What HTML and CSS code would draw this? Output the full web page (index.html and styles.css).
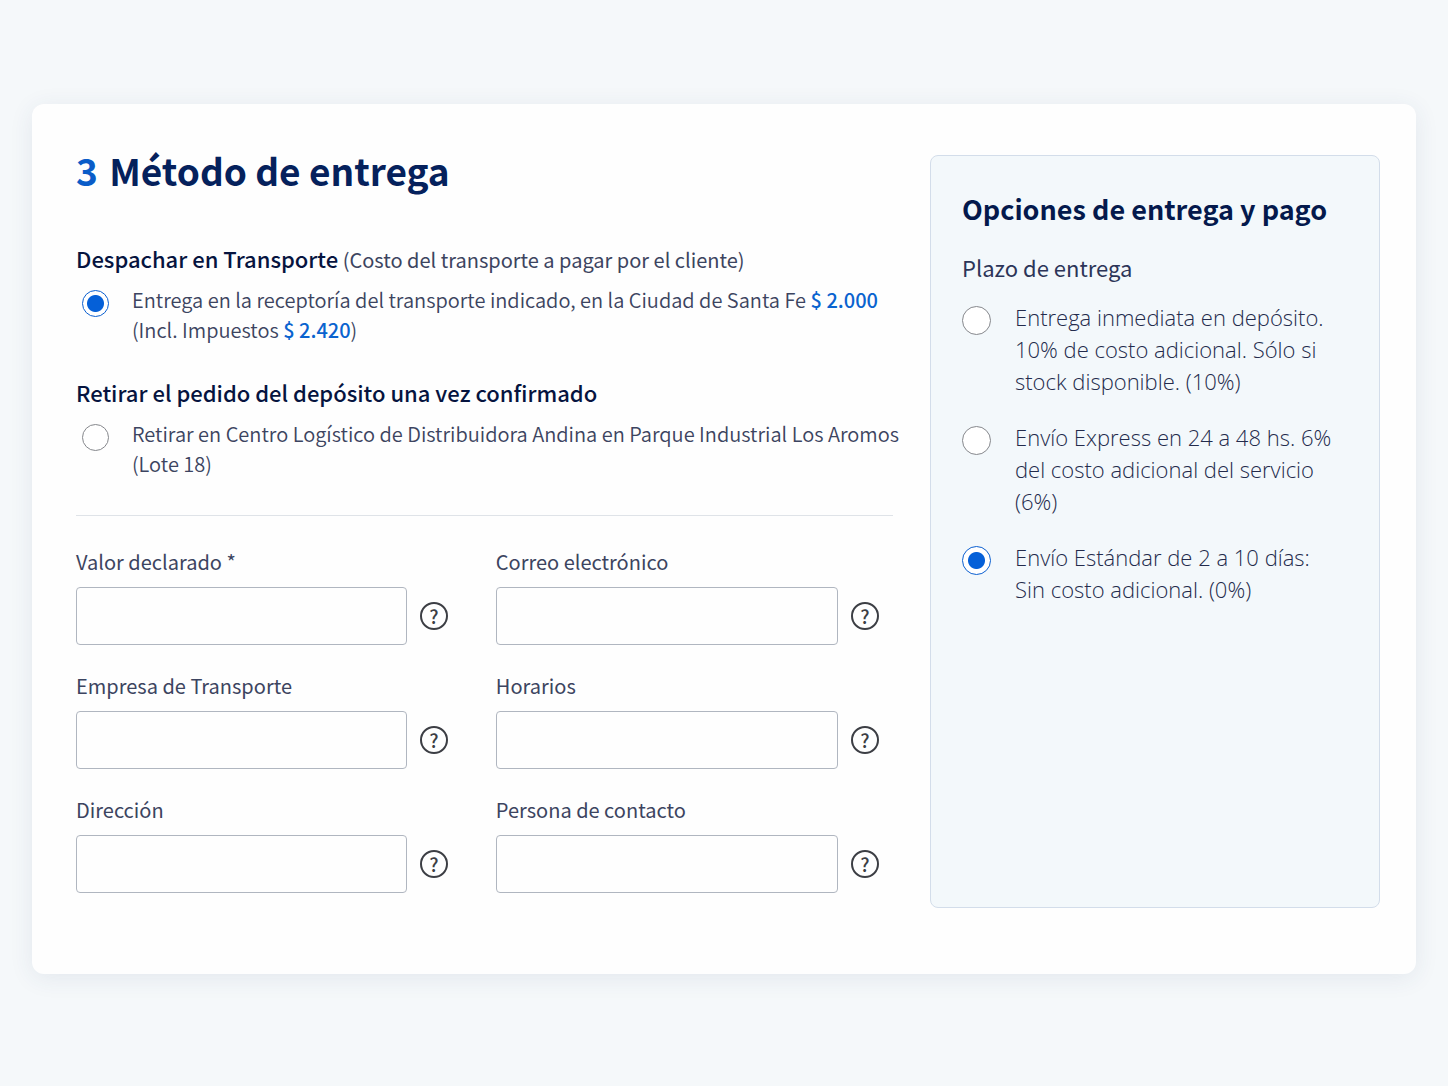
FILE: index.html
```html
<!DOCTYPE html>
<html lang="es">
<head>
	<meta charset="utf-8">
	<meta name="viewport" content="width=device-width, initial-scale=1">
	<title>Método de entrega</title>
	<link rel="stylesheet" href="styles.css">
</head>
<body>
<form class="card">
	<div class="main">
		<h1 class="title"><span class="step">3</span> Método de entrega</h1>
		<fieldset class="group">
			<legend><b>Despachar en Transporte</b> (Costo del transporte a pagar por el cliente)</legend>
			<div class="option">
				<input type="radio" name="metodo" id="despachar" checked>
				<label for="despachar">Entrega en la receptoría del transporte indicado, en la Ciudad de Santa Fe <span class="price">$ 2.000</span><br>(Incl. Impuestos <span class="price">$ 2.420</span>)</label>
			</div>
		</fieldset>
		<fieldset class="group">
			<legend><b>Retirar el pedido del depósito una vez confirmado</b></legend>
			<div class="option">
				<input type="radio" name="metodo" id="retirar">
				<label for="retirar">Retirar en Centro Logístico de Distribuidora Andina en Parque Industrial Los Aromos (Lote 18)</label>
			</div>
		</fieldset>
		<hr class="line">
		<div class="fields">
			<div class="field">
				<label for="valor">Valor declarado *</label>
				<div class="control">
					<input type="text" id="valor" required>
					<button type="button" class="help">?</button>
				</div>
			</div>
			<div class="field">
				<label for="correo">Correo electrónico</label>
				<div class="control">
					<input type="email" id="correo">
					<button type="button" class="help">?</button>
				</div>
			</div>
			<div class="field">
				<label for="empresa">Empresa de Transporte</label>
				<div class="control">
					<input type="text" id="empresa">
					<button type="button" class="help">?</button>
				</div>
			</div>
			<div class="field">
				<label for="horarios">Horarios</label>
				<div class="control">
					<input type="text" id="horarios">
					<button type="button" class="help">?</button>
				</div>
			</div>
			<div class="field">
				<label for="direccion">Dirección</label>
				<div class="control">
					<input type="text" id="direccion">
					<button type="button" class="help">?</button>
				</div>
			</div>
			<div class="field">
				<label for="contacto">Persona de contacto</label>
				<div class="control">
					<input type="text" id="contacto">
					<button type="button" class="help">?</button>
				</div>
			</div>
		</div>
	</div>
	<aside class="side">
		<h2>Opciones de entrega y pago</h2>
		<fieldset class="terms">
			<legend>Plazo de entrega</legend>
			<div class="option">
				<input type="radio" name="plazo" id="inmediata">
				<label for="inmediata">Entrega inmediata en depósito. 10% de costo adicional. Sólo si stock disponible. (10%)</label>
			</div>
			<div class="option">
				<input type="radio" name="plazo" id="express">
				<label for="express">Envío Express en 24 a 48 hs. 6% del costo adicional del servicio (6%)</label>
			</div>
			<div class="option">
				<input type="radio" name="plazo" id="estandar" checked>
				<label for="estandar">Envío Estándar de 2 a 10 días:<br>Sin costo adicional. (0%)</label>
			</div>
		</fieldset>
	</aside>
</form>
</body>
</html>
```
FILE: styles.css
```css
*{
	margin:0;
	padding:0;
	box-sizing:border-box;
}
body{
	min-height:100vh;
	padding:104px 32px;
	background:#f5f8fa;
	font-family:"Noto Sans CJK SC","Noto Sans",sans-serif;
	font-size:20px;
	line-height:30px;
	color:#3c4460;
}
fieldset{
	border:0;
	min-width:0;
}
.card{
	display:grid;
	grid-template-columns:minmax(0,1fr) 450px;
	gap:25px;
	padding:51px 36px 66px 44px;
	background:#fefefe;
	border-radius:12px;
	box-shadow:0 4px 24px rgba(40,70,110,.09);
}
.main{
	padding-bottom:15px;
}
.title{
	margin-bottom:60px;
	font-size:37px;
	line-height:30px;
	font-weight:700;
	color:#05215c;
}
.step{
	margin-right:3px;
	color:#0a5cc8;
}
.group{
	margin-bottom:34px;
}
.group legend{
	margin-bottom:10px;
}
.group b{
	font-size:22px;
	line-height:1;
	font-weight:500;
	color:#06143f;
}
.option{
	display:flex;
	align-items:flex-start;
	gap:23px;
}
.group .option{
	padding-left:6px;
	font-weight:350;
}
.option input{
	appearance:none;
	flex:none;
	width:27px;
	height:27px;
	margin-top:5px;
	border:1px solid #85878c;
	border-radius:50%;
	background:#fff;
}
.option input:checked{
	border-color:#0a5fd0;
	background:radial-gradient(circle,#0560d8 8px,#fff 9px);
}
.price{
	font-weight:500;
	line-height:1;
	color:#0a63cf;
}
.line{
	margin:36px 12px 30px 0;
	border:0;
	border-top:1px solid #dfe3e8;
}
.fields{
	display:grid;
	grid-template-columns:33fr 34fr;
	gap:25px 48px;
	padding-right:26px;
}
.field label{
	display:block;
	margin-bottom:9px;
	line-height:32px;
}
.control{
	display:flex;
	align-items:center;
	gap:13px;
}
.control input{
	flex:1;
	min-width:0;
	height:58px;
	padding:0 16px;
	border:1px solid #b0b6c0;
	border-radius:4px;
	background:#fefefe;
	font:inherit;
	color:inherit;
}
.help{
	flex:none;
	width:28px;
	height:28px;
	border:2px solid #3c3e44;
	border-radius:50%;
	background:none;
	font-family:inherit;
	font-size:19px;
	font-weight:500;
	line-height:22px;
	color:#3c3e44;
	cursor:pointer;
}
.side{
	padding:35px 31px;
	border:1px solid #d3ddea;
	border-radius:8px;
	background:#f3f8fb;
}
.side h2{
	margin-bottom:24px;
	font-size:27px;
	line-height:36px;
	font-weight:700;
	color:#04194c;
}
.terms{
	font-size:22px;
	line-height:32px;
}
.terms legend{
	margin-bottom:18px;
	color:#2c3558;
}
.terms .option{
	gap:24px;
	margin-bottom:24px;
	font-family:"Open Sans","Noto Sans",sans-serif;
	font-weight:300;
	color:#232b4c;
}
.terms .option input{
	width:29px;
	height:29px;
}
```
